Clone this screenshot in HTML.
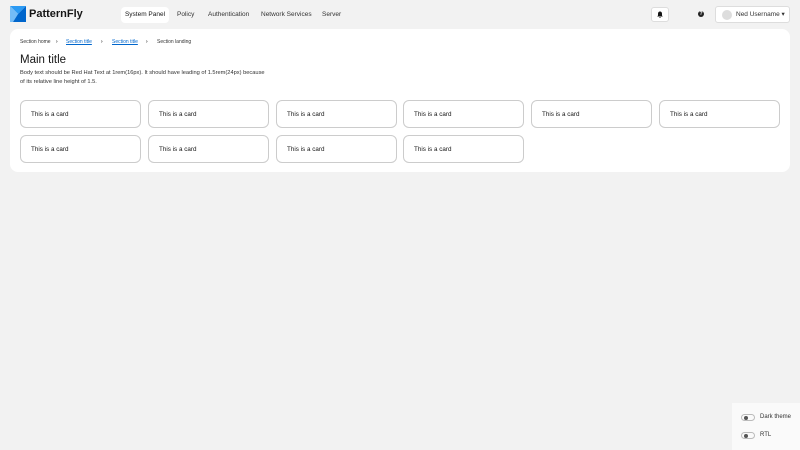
<!DOCTYPE html>
<html><head><style>
*{box-sizing:border-box;margin:0;padding:0}
body{width:800px;height:450px;background:#f2f2f2;font-family:"Liberation Sans",sans-serif;position:relative;overflow:hidden;color:#151515}
.logo{position:absolute;left:10px;top:6px}
.brand{position:absolute;left:29px;top:8px;font-weight:bold;font-size:11px}
.nav{position:absolute;top:7px;left:0;font-size:6.5px;color:#333}
.nav div{position:absolute;height:16px;line-height:16px;border-radius:4px;white-space:nowrap}
.nav .a{background:#fff;color:#151515;width:48px;text-align:center}
.bell{position:absolute;left:651px;top:7px;width:18px;height:15px;background:#fff;border:1px solid #ddd;border-radius:3px}
.help{position:absolute;left:698px;top:11px;width:6px;height:6px;border-radius:50%;background:#222;color:#fff;font-size:5px;line-height:6px;text-align:center;font-weight:bold}
.user{position:absolute;left:715px;top:6px;width:75px;height:17px;background:#fff;border:1px solid #ddd;border-radius:3px;font-size:6.5px;line-height:15px;padding-left:20px;color:#333}
.user i{position:absolute;left:6px;top:3px;width:10px;height:10px;border-radius:50%;background:#ddd}
.main{position:absolute;left:10px;top:29px;width:780px;height:143px;background:#fff;border-radius:8px}
.bc{position:absolute;left:10px;top:10px;font-size:5px;color:#333;white-space:nowrap}
.bc span{position:absolute;top:0}
.bc a{color:#06c;text-decoration:underline}
h1{position:absolute;left:10px;top:24px;font-size:11.5px;font-weight:normal;line-height:14px}
p{position:absolute;left:10px;top:40px;font-size:5.7px;line-height:9px;width:250px;color:#333}
.card{position:absolute;width:121px;height:28px;border:1px solid #ccc;border-radius:6px;font-size:6.3px;display:flex;align-items:center;padding-left:10px;padding-top:1px}
.sw{position:absolute;left:732px;top:403px;width:68px;height:47px;background:#fafafa;font-size:6px;color:#333}
.sw span{position:absolute;left:28px;line-height:8px}
.t{position:absolute;left:9px;width:14px;height:7px;border:1px solid #bbb;border-radius:4px}
.t i{position:absolute;left:2px;top:1px;width:4px;height:4px;border-radius:50%;background:#555}
</style></head><body>
<svg class="logo" width="16" height="16" viewBox="0 0 16 16"><path d="M0 0H16L8 8Z" fill="#2b9af3"/><path d="M0 0L8 8 3 16H0Z" fill="#73bcf7"/><path d="M3 16L8 8 16 0V16Z" fill="#06c"/></svg>
<div class="brand">PatternFly</div>
<div class="nav"><div class="a" style="left:121px">System Panel</div><div style="left:177px">Policy</div><div style="left:208px">Authentication</div><div style="left:261px">Network Services</div><div style="left:322px">Server</div></div>
<div class="bell"><svg width="16" height="13" viewBox="0 0 16 13"><path d="M8 3.5c-1.3 0-2 1-2 2.3v1.7l-0.8 1h5.6l-0.8-1V5.8c0-1.3-.7-2.3-2-2.3zM7.2 9h1.6a.8.8 0 01-1.6 0z" fill="#151515"/></svg></div>
<div class="help">?</div>
<div class="user"><i></i>Ned Username ▾</div>
<div class="main">
<div class="bc"><span style="left:0">Section home</span><span style="left:36px;font-weight:bold">›</span><span style="left:46px"><a>Section title</a></span><span style="left:81px;font-weight:bold">›</span><span style="left:92px"><a>Section title</a></span><span style="left:126px;font-weight:bold">›</span><span style="left:137px">Section landing</span></div>
<h1>Main title</h1>
<p>Body text should be Red Hat Text at 1rem(16px). It should have leading of 1.5rem(24px) because of its relative line height of 1.5.</p>
<div class="card" style="left:10px;top:71px">This is a card</div>
<div class="card" style="left:138px;top:71px">This is a card</div>
<div class="card" style="left:266px;top:71px">This is a card</div>
<div class="card" style="left:393px;top:71px">This is a card</div>
<div class="card" style="left:521px;top:71px">This is a card</div>
<div class="card" style="left:649px;top:71px">This is a card</div>
<div class="card" style="left:10px;top:106px">This is a card</div>
<div class="card" style="left:138px;top:106px">This is a card</div>
<div class="card" style="left:266px;top:106px">This is a card</div>
<div class="card" style="left:393px;top:106px">This is a card</div>
</div>
<div class="sw"><div class="t" style="top:11px"><i></i></div><span style="top:10px">Dark theme</span>
<div class="t" style="top:29px"><i></i></div><span style="top:28px">RTL</span></div>
</body></html>
